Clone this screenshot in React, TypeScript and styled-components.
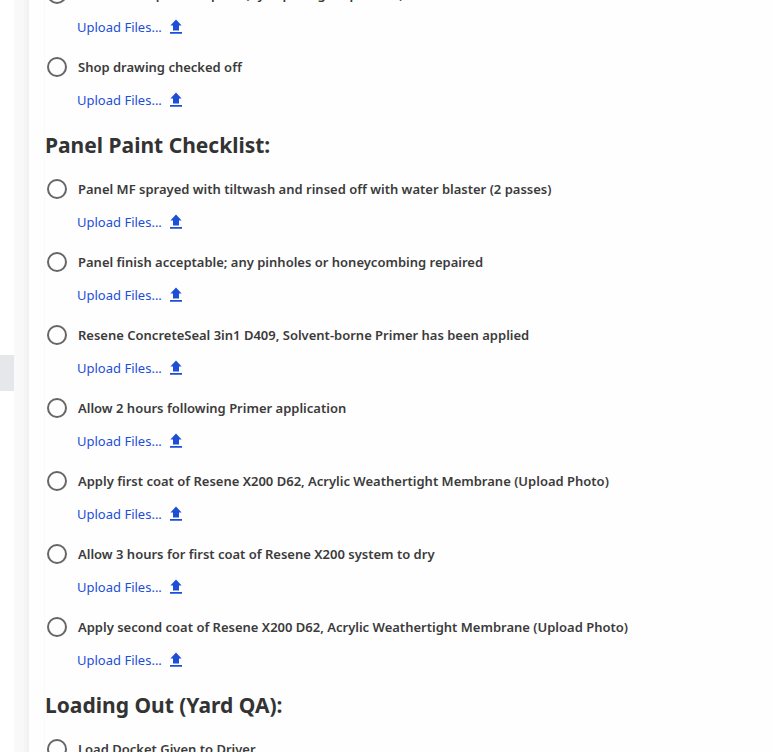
import React from "react";
import styled, { createGlobalStyle } from "styled-components";

const Global = createGlobalStyle`
  *, *::before, *::after { box-sizing: border-box; }
  html, body, #root { height: 100%; }
  body {
    margin: 0;
    overflow: hidden;
    background: #fff;
    color: #333;
    font-family: "Segoe UI", "Noto Sans", "Open Sans", sans-serif;
  }
`;

const Page = styled.div`
  display: flex;
  height: 100vh;
  overflow: hidden;
`;

const Rail = styled.aside`
  flex: 0 0 14px;
  padding-top: 355px;
  background: #fff;
`;

const RailMarker = styled.div`
  height: 36px;
  background: #e5e7eb;
`;

const Gutter = styled.div`
  flex: 0 0 15px;
  background: linear-gradient(to right, #fafafa, #f8f8f8 60%, #f0f0f0);
`;

const Sheet = styled.main`
  flex: 1;
  min-width: 0;
  padding-left: 15px;
  background: #fefefe;
`;

const Body = styled.div`
  margin-top: -26px;
  border-left: 1px solid #fafafa;
`;

const Heading = styled.h2`
  margin: 0;
  height: 49px;
  font-size: 21px;
  line-height: 50px;
  font-weight: 700;
  white-space: nowrap;
`;

const Item = styled.div`
  height: 73px;
  padding-left: 2px;
`;

const Label = styled.label`
  display: flex;
  align-items: center;
  gap: 11px;
  height: 40px;
  font-size: 13px;
  line-height: 20px;
  font-weight: 600;
  white-space: nowrap;
  color: #3b3b3b;
`;

const Radio = styled.input`
  appearance: none;
  flex: none;
  width: 20px;
  height: 20px;
  margin: 0;
  border: 2px solid #666;
  border-radius: 50%;
  background: #fff;
  &:checked { box-shadow: inset 0 0 0 3px #fff; background: #1d4ed8; }
`;

const UploadButton = styled.button`
  display: flex;
  align-items: center;
  gap: 7px;
  height: 26px;
  margin: 0 0 0 30px;
  padding: 0;
  border: 0;
  background: none;
  color: #1d4ed8;
  font: inherit;
  font-size: 13px;
  line-height: 20px;
  cursor: pointer;
`;

const UploadIcon = () => (
  <svg width="14" height="16" viewBox="0 0 14 16" aria-hidden="true">
    <path d="M7 0.6 L12.6 6.5 H10 V11.6 H4 V6.5 H1.4 Z M1 13.1 H13 V14.8 H1 Z" fill="currentColor" />
  </svg>
);

function Check({ text }: { text: string }) {
  return (
    <Item>
      <Label>
        <Radio type="radio" name={text} />
        {text}
      </Label>
      <UploadButton type="button">
        Upload Files...
        <UploadIcon />
      </UploadButton>
    </Item>
  );
}

const sections = [
  {
    title: "",
    items: ["Dimensions planned print (by expelling air pockets)", "Shop drawing checked off"],
  },
  {
    title: "Panel Paint Checklist:",
    items: [
      "Panel MF sprayed with tiltwash and rinsed off with water blaster (2 passes)",
      "Panel finish acceptable; any pinholes or honeycombing repaired",
      "Resene ConcreteSeal 3in1 D409, Solvent-borne Primer has been applied",
      "Allow 2 hours following Primer application",
      "Apply first coat of Resene X200 D62, Acrylic Weathertight Membrane (Upload Photo)",
      "Allow 3 hours for first coat of Resene X200 system to dry",
      "Apply second coat of Resene X200 D62, Acrylic Weathertight Membrane (Upload Photo)",
    ],
  },
  { title: "Loading Out (Yard QA):", items: ["Load Docket Given to Driver"] },
];

export default function App() {
  return (
    <>
      <Global />
      <Page>
        <Rail><RailMarker /></Rail>
        <Gutter />
        <Sheet>
          <Body>
            {sections.map((s) => (
              <section key={s.title}>
                {s.title && <Heading>{s.title}</Heading>}
                {s.items.map((t) => <Check key={t} text={t} />)}
              </section>
            ))}
          </Body>
        </Sheet>
      </Page>
    </>
  );
}
